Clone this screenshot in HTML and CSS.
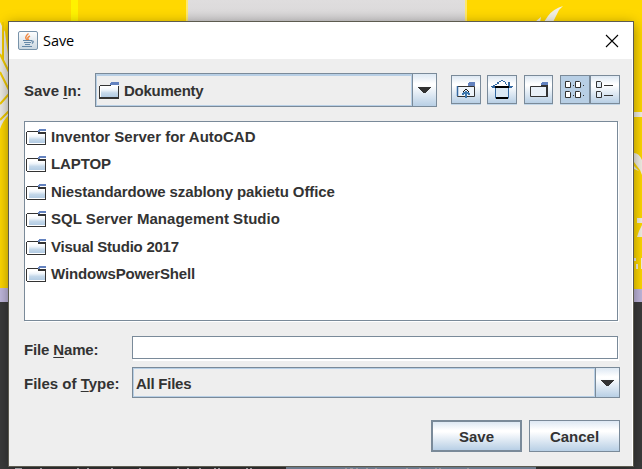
FILE: index.html
```
<!DOCTYPE html>
<html lang="pl">
<head>
<meta charset="utf-8">
<title>Save</title>
<link rel="stylesheet" href="styles.css">
</head>
<body>
<svg class="backdrop" viewBox="0 0 642 469" aria-hidden="true">
  <defs>
    <linearGradient id="grey" x1="0" y1="0" x2="0" y2="1"><stop offset="0" stop-color="#dfddde"/><stop offset=".5" stop-color="#dcdadb"/><stop offset="1" stop-color="#cfcdce"/></linearGradient>
    <linearGradient id="folder" x1="0" y1="0" x2="0" y2="1"><stop offset="0" stop-color="#fff"/><stop offset=".3" stop-color="#eef4fa"/><stop offset=".6" stop-color="#c4d8ea"/><stop offset="1" stop-color="#b2cbe3"/></linearGradient>
    <symbol id="folder-icon" viewBox="0 0 20 16"><path d="M1 2h18v13H1z" fill="#fff"/><path d="M3 5h16v9H3z" fill="url(#folder)"/><path d="M1 2h11v1H1zM0 3h1v12H0zM1 15h19v1H1zM19 5h1v10h-1zM12 3h8v2h-8z" fill="#333"/><path d="M13 0h7v2h-7zM12 1h2v2h-2z" fill="#6382bf"/></symbol>
    <symbol id="folder-open" viewBox="0 0 20 17"><path d="M1 3h18v12H1z" fill="#fff"/><path d="M2 5h17v10H2z" fill="url(#folder)"/><path d="M1 3h11v1H1zM0 4h1v12H0zM0 15h20v2H0zM19 4h1v12h-1z" fill="#333"/><path d="M12 0h8v3h-9V1h1z" fill="#6382bf"/></symbol>
  </defs>
  <path fill="#ffd800" d="M0 0h642v289H0z"/>
  <path fill="#fff200" d="M71 0h7v22h-7z"/>
  <path fill="#ffe86a" d="M186 0h2v22h-2zM465 0h2v22h-2z"/>
  <path fill="url(#grey)" d="M188 0h277v22H188z"/>
  <path fill="#c0b7dc" d="M0 288h9v14H0zM633 289h9v13h-9z"/>
  <path fill="#3b3b3b" d="M0 302h642v167H0z"/>
  <path fill="#eeece5" d="M0 22l5 10 4 30v53q-6 5-9 14z"/>
  <path fill="none" stroke="#f2cb00" stroke-width="2" d="M3 22v38M0 54l9 18M0 72l9 18M0 104l9-10M0 120l9-9"/>
  <path fill="#f1efe4" d="M563 6q-10 3-15 10l-4 6h9l3-6 3-6zM541 17l-6 5h5zM634 112h8v5h-8zM634 153q5 0 8 7v15l-2-5-6-8zM634 166l5 5-5-2zM637 218h5v5h-5zM642 225v12h-5q2-7 5-12zM634 258h2v3h-2zM636 264h2v5h-2zM641 258h1v11h-1z"/>
  <path fill="#8fa3b9" d="M286 466h250v3H286z"/>
  <path stroke="#c9ccd0" d="M15 468.500h7M40 468.500h2M77 468.500h2M87 468.500h2M111 468.500h2M139 468.500h2M177 468.500h2M187 468.500h2M199 468.500h2M214 468.500h2M218 468.500h2M246 468.500h2M250 468.500h2M345 468.500h2M350 468.500h3M356 468.500h2M366 468.500h2M375 468.500h2M406 468.500h2M419 468.500h2M435 468.500h2M439 468.500h2M467 468.500h2"/>
</svg>
<main class="dialog">
  <header class="titlebar">
    <svg class="java" viewBox="0 0 20 19"><defs><linearGradient id="tile" x1="0" y1="0" x2="0" y2="1"><stop stop-color="#fff"/><stop offset="1" stop-color="#c9d6e0"/></linearGradient></defs><rect x=".5" y=".5" width="19" height="18" rx="1.500" fill="url(#tile)" stroke="#7893aa"/><path d="M10.500 2.500q-5 4-1 7M12 5q-4 2-1 4" fill="none" stroke="#f08a45" stroke-width="1.500"/><path d="M5 9.500h9M6 11.500h7M7 13.500h5M4 15.500h10M13 10q4-.5 1 2.500" fill="none" stroke="#6689a8" stroke-width="1.200"/></svg>
    <span class="caption">Save</span>
    <svg class="close" viewBox="0 0 14 14"><path d="M1 1l12 12M13 1L1 13" stroke="#000" stroke-width="1.100"/></svg>
  </header>
  <div class="content">
    <div class="lookin">
      <span class="label label-in">Save <u>I</u>n:</span>
      <div class="combo combo-in"><div class="value"><svg class="folder open"><use href="#folder-open"/></svg><span class="tight">Dokumenty</span></div><div class="arrow"><svg viewBox="0 0 13 6"><path d="M0 0h13v1h-1v1h-1v1h-1v1H9v1H8v1H5V5H4V4H3V3H2V2H1V1H0z" fill="#333"/></svg></div></div>
      <div class="tools">
        <button class="tool up"><svg viewBox="0 0 20 16"><path d="M1.500 4.500h17v10h-17z" fill="#eef4fa" stroke="#333"/><path d="M1.500 4v10" stroke="#3569a2" stroke-width="1.500"/><path d="M13 0h6v4h-7V1h1z" fill="#6382bf"/><path d="M9 9h2v1h2v1h1v2h-2v-1h-1v4H9v-4H8v1H6v-2h1v-1h2z" fill="#3f78ad"/><path d="M9 7h2v1H9zM8 8h1v1H8zM11 8h1v1h-1zM7 9h1v1H7zM12 9h1v1h-1z" fill="#111"/></svg></button>
        <button class="tool home"><svg viewBox="0 0 22 19"><path d="M4.500 7h13v11h-13z" fill="#dbe8f3" stroke="#3569a2"/><path d="M7 2h2V1h4v1h2v2h2v2H4V4h3z" fill="#fff"/><path d="M0 6h22v1H0zM1 7h20v1H1zM2 5h2v1H2zM4 4h2v1H4zM6 2h2v2H6zM8 1h2v1H8zM10 0h2v1h-2zM12 1h2v1h-2zM14 2h1v2h-1zM15 4h1v1h-1zM17 2h2v4h-2z" fill="#3569a2"/><path d="M4 6h14v2H4zM5 17h12v2H5z" fill="#000"/></svg></button>
        <button class="tool new"><svg viewBox="0 0 20 16"><path d="M1.500 4.500h16v10h-16z" fill="#eaf1f8" stroke="#333"/><path d="M12 3h7v2h-7zM17 4h2v11h-2z" fill="#333"/><path d="M13 0h6v3h-7V1h1z" fill="#6382bf"/></svg></button>
        <div class="views">
          <button class="tool grid"><svg viewBox="0 0 20 17"><g fill="#fff" stroke="#333"><path d="M.5.500h4l1 1v5h-5zM10.500.500h4l1 1v5h-5zM.5 10.500h4l1 1v5h-5zM10.500 10.500h4l1 1v5h-5z"/></g><path d="M8 4h1v1H8zM18 4h1v1h-1zM8 14h1v1H8zM18 14h1v1h-1z" fill="#333"/></svg></button>
          <button class="tool rows"><svg viewBox="0 0 18 17"><path d="M.5.500h4l1 1v5h-5zM.5 10.500h4l1 1v5h-5z" fill="#e4eef7" stroke="#333"/><path d="M8 4h9v1H8zM8 14h9v1H8z" fill="#333"/></svg></button>
        </div>
      </div>
    </div>
    <ul class="files">
      <li><svg class="folder"><use href="#folder-icon"/></svg><span>Inventor Server for AutoCAD</span></li>
      <li><svg class="folder"><use href="#folder-icon"/></svg><span class="snug">LAPTOP</span></li>
      <li><svg class="folder"><use href="#folder-icon"/></svg><span class="snug">Niestandardowe szablony pakietu Office</span></li>
      <li><svg class="folder"><use href="#folder-icon"/></svg><span class="wide">SQL Server Management Studio</span></li>
      <li><svg class="folder"><use href="#folder-icon"/></svg><span class="tight">Visual Studio 2017</span></li>
      <li><svg class="folder"><use href="#folder-icon"/></svg><span class="snugger">WindowsPowerShell</span></li>
    </ul>
    <div class="field name"><span class="label snugger">File <u>N</u>ame:</span><div class="input"></div></div>
    <div class="field type"><span class="label">Files of <u>T</u>ype:</span><div class="combo"><div class="value tight">All Files</div><div class="arrow"><svg viewBox="0 0 13 6"><path d="M0 0h13v1h-1v1h-1v1h-1v1H9v1H8v1H5V5H4V4H3V3H2V2H1V1H0z" fill="#333"/></svg></div></div></div>
    <div class="actions"><button class="action default">Save</button><button class="action">Cancel</button></div>
  </div>
</main>
</body>
</html>
```
FILE: styles.css
```
* { box-sizing: border-box; }
body { margin: 0; width: 642px; height: 469px; overflow: hidden; font: bold 15px "Liberation Sans", Arial, sans-serif; color: #333; background: #3b3b3b; }
svg { display: block; flex: none; }
.backdrop { position: absolute; left: 0; top: 0; width: 642px; height: 469px; z-index: -1; }
.dialog { margin: 21px 0 0 8px; width: 626px; height: 446px; border: 1px solid #5d5b50; background: #eee; box-shadow: 0 3px 12px rgba(0,0,0,.4); }
.titlebar { display: flex; align-items: center; height: 37px; padding: 0 14px 0 9px; background: #fff; }
.java { width: 20px; height: 19px; }
.caption { flex: 1; margin-left: 5px; font: 14.500px "Open Sans", sans-serif; color: #000; letter-spacing: -.05px; }
.close { width: 14px; height: 14px; }
.content { padding: 14px 12px 0 15px; height: 407px; border-right: 1px solid #fff; }
u { text-decoration: underline; text-decoration-thickness: 1px; text-underline-offset: 2px; }
.snug { letter-spacing: -.1px; }
.snugger { letter-spacing: -.15px; }
.tight { letter-spacing: -.25px; }
.wide { letter-spacing: .03px; }
.lookin { display: flex; height: 34px; }
.label { white-space: nowrap; }
.label-in { width: 71px; line-height: 36px; }
.combo { display: flex; border: 1px solid #7a8a99; height: 100%; }
.combo-in { width: 342px; }
.combo .value { flex: 1; display: flex; align-items: center; border: 1px solid #b8cfe5; }
.combo-in .value { border-width: 2px 1px 1px; padding-left: 2px; }
.folder { width: 20px; height: 16px; margin-right: 5px; }
.folder.open { height: 17px; }
.arrow { display: flex; align-items: center; justify-content: center; border-left: 1px solid #7a8a99; width: 24px; background: linear-gradient(#dde8f3, #fff 30%, #fff 35%, #b8cfe5); }
.arrow svg { width: 13px; height: 6px; }
.tools { display: flex; padding: 2px 0 0 14px; }
.tool { display: flex; align-items: center; justify-content: center; padding: 0; width: 30px; height: 29px; border: 1px solid #7a8a99; background: linear-gradient(#dde8f3, #fff 30%, #fff 35%, #b8cfe5); box-shadow: 0 1px #c4d7e8; }
.up svg, .new svg { width: 20px; height: 16px; }
.home { margin: 0 7px 0 6px; }
.home svg { width: 22px; height: 19px; }
.new { width: 29px; margin-right: 7px; }
.views { display: flex; }
.grid { width: 30px; background: #b8cfe5; }
.grid svg { width: 20px; height: 17px; }
.rows svg { width: 18px; height: 17px; }
.files { list-style: none; margin: 14px 0 0; padding: 2px 0 0 1px; width: 594px; height: 200px; border: 1px solid #7a8a99; background: #fff; box-shadow: 1px 1px #fff; }
.files li { display: flex; align-items: center; height: 27px; padding-bottom: 1px; }
.files li span { padding-bottom: 2px; }
.files li:nth-child(even) { height: 28px; padding-bottom: 2px; }
.field { display: flex; }
.field .label { width: 108px; }
.name { margin-top: 15px; height: 23px; line-height: 28px; }
.input { width: 486px; border: 1px solid #7a8a99; background: #fff; box-shadow: 1px 2px #fff; }
.type { margin-top: 8px; height: 31px; line-height: 33px; }
.type .combo { width: 488px; }
.type .value { padding: 2px 0 0 2px; }
.actions { display: flex; justify-content: flex-end; gap: 7px; margin-top: 22px; }
.action { width: 91px; height: 32px; padding: 0; border: 1px solid #7a8a99; background: linear-gradient(#dde8f3, #fff 30%, #fff 35%, #b8cfe5); font: inherit; color: #333; }
.default { border-width: 2px; }
```
